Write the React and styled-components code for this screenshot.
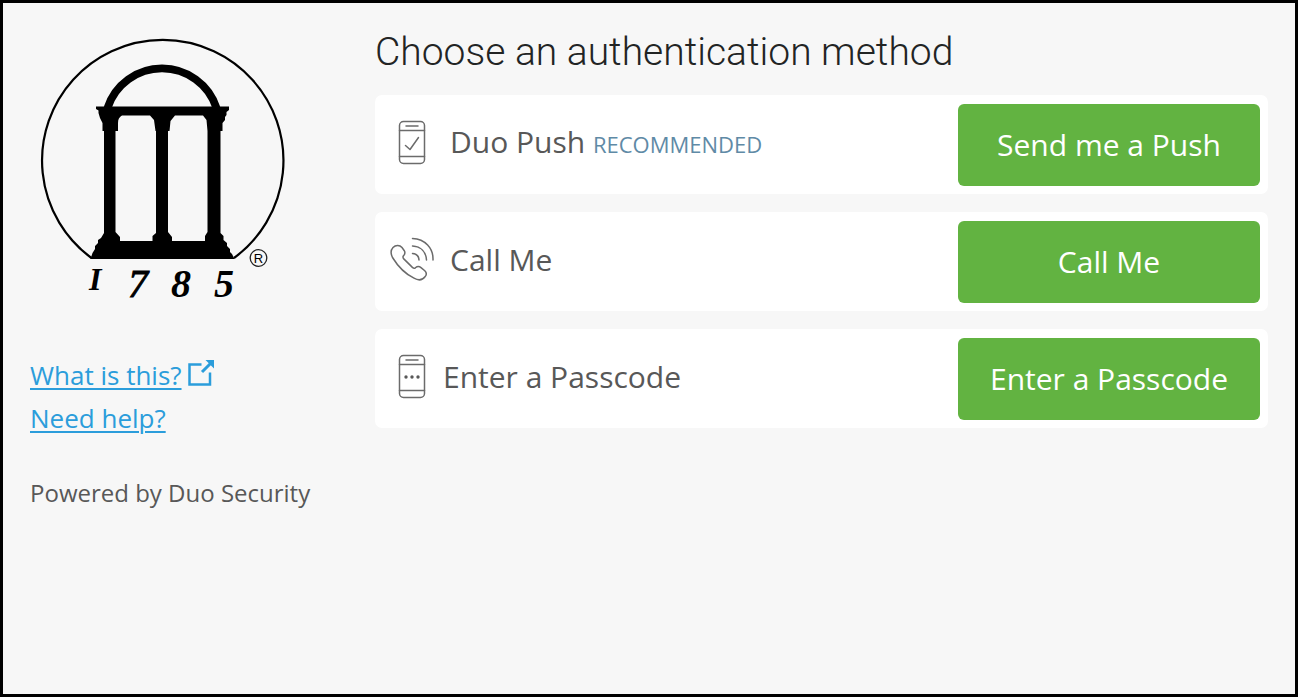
import React from "react";
import styled, { createGlobalStyle } from "styled-components";

const GlobalStyle = createGlobalStyle`
  *, *::before, *::after { box-sizing: border-box; }
  body {
    margin: 0;
    background: #f7f7f7;
    color: #585858;
    font-family: "Open Sans", "Noto Sans", sans-serif;
  }
`;

const Frame = styled.div`
  min-height: 100vh;
  border: 3px solid #000;
  padding: 27px;
  display: grid;
  grid-template-columns: 277px minmax(0, 1fr);
  column-gap: 68px;
  align-items: start;
`;

const Sidebar = styled.aside`
  display: flex;
  flex-direction: column;
`;

const Logo = styled.svg`
  width: 265px;
  height: 275px;
  margin-bottom: 49px;
`;

const HelpLinks = styled.nav`
  display: flex;
  flex-direction: column;
  align-items: flex-start;
  font-size: 26px;
  line-height: 43px;
`;

const HelpLink = styled.a`
  display: flex;
  align-items: flex-start;
  gap: 5px;
  color: #2b9ddb;
  text-decoration: none;

  span {
    text-decoration: underline;
    text-decoration-thickness: 2px;
    text-underline-offset: 3px;
  }

  svg {
    width: 28px;
    height: 28px;
    margin-top: 5px;
  }
`;

const PoweredBy = styled.p`
  margin: 37px 0 0;
  font-size: 24px;
  line-height: 32px;
  white-space: nowrap;
`;

const Main = styled.main`
  display: flex;
  flex-direction: column;
`;

const Title = styled.h1`
  margin: 0 0 20px;
  color: #222424;
  font-family: Roboto, "Open Sans", sans-serif;
  font-size: 39px;
  font-weight: 300;
  line-height: 45px;
`;

const MethodList = styled.ul`
  margin: 0;
  padding: 0;
  list-style: none;
  display: flex;
  flex-direction: column;
  gap: 18px;
`;

const MethodCard = styled.li`
  display: flex;
  align-items: center;
  padding: 9px 8px 8px;
  border-radius: 7px;
  background: #fff;
`;

const MethodIcon = styled.svg`
  flex: none;
  width: 44px;
  height: 46px;
  margin: 0 ${(p) => (p.$tight ? 9 : 16)}px 4px 7px;
  fill: none;
  stroke: #6b6b6b;
  stroke-width: 1.5;
  stroke-linecap: round;
  stroke-linejoin: round;
`;

const MethodLabel = styled.div`
  flex: 1;
  padding-bottom: 5px;
  font-size: 30px;
  line-height: 42px;
`;

const Tag = styled.small`
  color: #5f8aa6;
  font-size: 22px;
`;

const ActionButton = styled.button`
  flex: none;
  width: 302px;
  height: 82px;
  padding: 0 0 1px;
  border: 0;
  border-radius: 6px;
  background: #62b341;
  color: #fff;
  font: 500 30px/42px "Open Sans", "Noto Sans", sans-serif;
  cursor: pointer;
`;

const PhoneBody = () => (
  <>
    <rect x="9.5" y="1.5" width="25" height="42" rx="4" />
    <path d="M9.5 10.5h25M9.5 36.5h25M16 6h12" />
  </>
);

const icons = {
  push: (
    <>
      <PhoneBody />
      <path d="M15.5 25.5l4.5 4 8.500-12" />
    </>
  ),
  call: (
    <>
      <path d="M3 10.500C5.500 8 9.500 7.500 12 10.500l2.300 3.200c1.400 2.300.2 4-1 5.300-.6 1-.3 2 .5 2.900l8.600 8.500c1 .9 2 1.100 3 .4 2-1.700 3.800-1.600 5.600-.2l3.800 3.200c2.200 2.200 1.800 4.200.2 6-2.500 3.300-6.800 3.800-11 1.400C15.500 37 8 29.500 2.500 20.500.500 16.500.300 13.500 3 10.500z" />
      <path d="M22.500 16.500c4 .3 6.300 2.700 6.500 6.500M22.500 9c8.500.5 13.500 6 14 14M22.500 1.500C35 2 43.500 11 43 23" />
    </>
  ),
  passcode: (
    <>
      <PhoneBody />
      <g fill="#585858" stroke="none">
        <circle cx="16" cy="23" r="1.700" />
        <circle cx="22" cy="23" r="1.700" />
        <circle cx="28" cy="23" r="1.700" />
      </g>
    </>
  ),
};

const methods = [
  { id: "push", label: "Duo Push", tag: "RECOMMENDED", action: "Send me a Push" },
  { id: "call", label: "Call Me", action: "Call Me" },
  { id: "passcode", label: "Enter a Passcode", action: "Enter a Passcode", tight: true },
];

function ArchLogo() {
  return (
    <Logo viewBox="30 30 265 275" role="img" aria-label="1785 arch logo">
      <path d="M91.500 258A120.700 120.700 0 1 1 234 258" fill="none" stroke="#000" strokeWidth="2.200" />
      <path d="M107.500 108A57.300 57.300 0 0 1 216.500 108" fill="none" stroke="#000" strokeWidth="7.800" />
      <path d="M96 106.500H229V110L226.500 112V115L225 117V120L222.500 123V131H220.500V233L223.500 236V240L227 243V246L230 249V252L232 254L234.500 259H90.500L92.500 253L95 249V246L98 243V240L101 238L104 233V131H102.500V123L100 118L98.500 113V110.500L96 109Z" />
      <g fill="#f7f7f7">
        <path d="M122 115.500H150L154 120L155.500 131H156V233L152.500 236V241H120V237L115.500 232V131H118V123C118 119 119.500 117 122 115.500Z" />
        <path d="M175 115.500H203L206.500 120L207.500 131V232L205 236V241H172V237L168 232V131H169.500L170.500 121Z" />
      </g>
      <g fontFamily="'Liberation Serif', serif" fontWeight="700" fontStyle="italic">
        <text x="89" y="290" fontSize="32">I</text>
        <text x="128" y="297" fontSize="40" fontWeight="400" stroke="#000" strokeWidth="1">7</text>
        <text x="171" y="297" fontSize="40">8</text>
        <text x="214" y="297" fontSize="40">5</text>
      </g>
      <circle cx="258.500" cy="258" r="8.300" fill="none" stroke="#222" strokeWidth="1.300" />
      <text x="258.500" y="262.500" fontFamily="'Liberation Sans', sans-serif" fontSize="13" textAnchor="middle">R</text>
    </Logo>
  );
}

export default function App() {
  return (
    <>
      <GlobalStyle />
      <Frame>
        <Sidebar>
          <ArchLogo />
          <HelpLinks>
            <HelpLink href="#about">
              <span>What is this?</span>
              <svg viewBox="0 0 28 28" fill="none" stroke="#2b9ddb" strokeWidth="2.500" aria-hidden="true">
                <path d="M14.500 5.500H2.500V25.500H23V13.500" />
                <path d="M15 13L23.500 4.500" strokeWidth="3" />
                <path d="M18.500 1H27V9.500Z" fill="#2b9ddb" stroke="none" />
              </svg>
            </HelpLink>
            <HelpLink href="#help">
              <span>Need help?</span>
            </HelpLink>
          </HelpLinks>
          <PoweredBy>Powered by Duo Security</PoweredBy>
        </Sidebar>
        <Main>
          <Title>Choose an authentication method</Title>
          <MethodList>
            {methods.map((m) => (
              <MethodCard key={m.id}>
                <MethodIcon viewBox="0 0 44 46" $tight={m.tight} aria-hidden="true">
                  {icons[m.id]}
                </MethodIcon>
                <MethodLabel>
                  {m.label}
                  {m.tag && <> <Tag>{m.tag}</Tag></>}
                </MethodLabel>
                <ActionButton type="button">{m.action}</ActionButton>
              </MethodCard>
            ))}
          </MethodList>
        </Main>
      </Frame>
    </>
  );
}
